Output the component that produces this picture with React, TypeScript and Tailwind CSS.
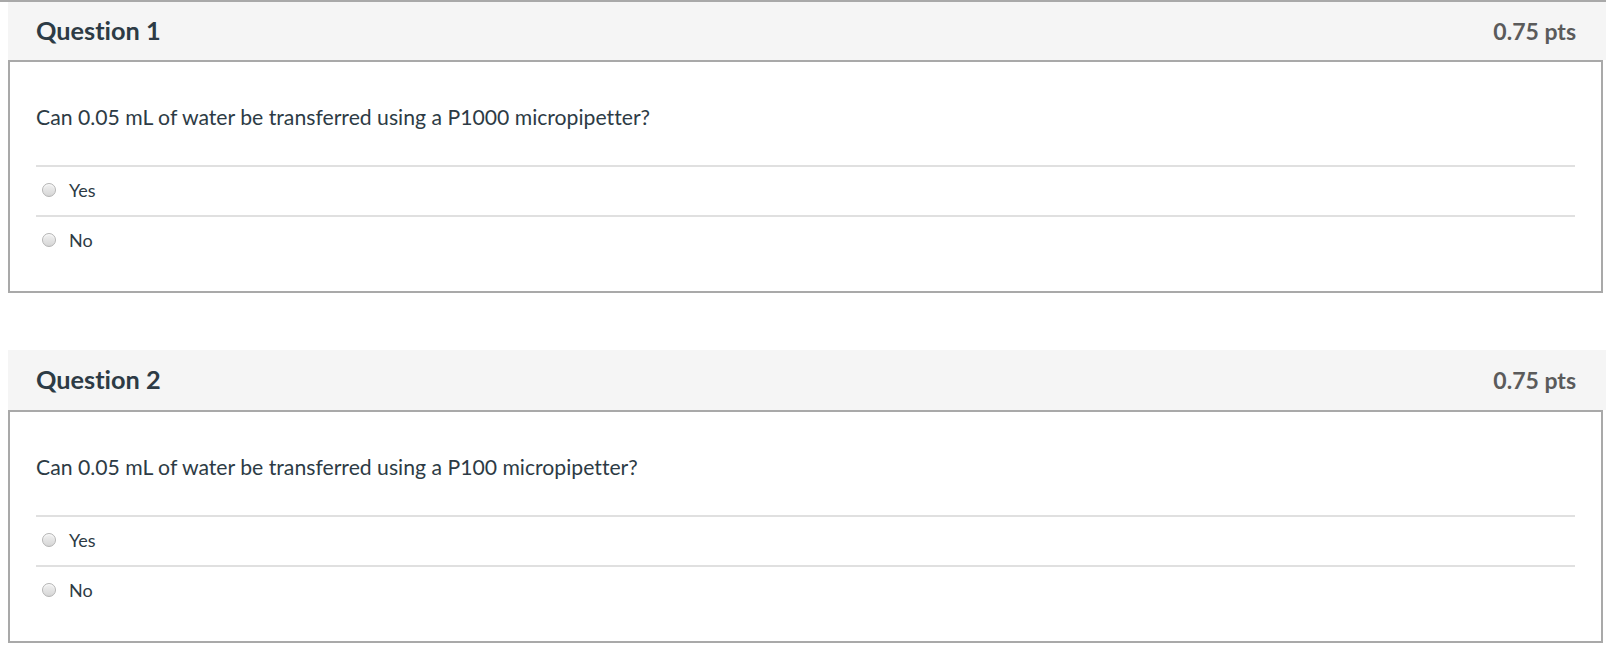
const questions = [
  { title: "Question 1", points: "0.75 pts", text: "Can 0.05 mL of water be transferred using a P1000 micropipetter?", first: true },
  { title: "Question 2", points: "0.75 pts", text: "Can 0.05 mL of water be transferred using a P100 micropipetter?", first: false },
]

const answers = ["Yes", "No"]

function Radio() {
  return (
    <span className="block w-[14px] h-[14px] rounded-full border border-[#b4b4b4] bg-linear-to-b from-[#f2f2f2] to-[#d6d6d6] shadow-[inset_0_1px_1px_rgba(255,255,255,0.8)]" />
  )
}

function Question({ title, points, text, first }: { title: string; points: string; text: string; first: boolean }) {
  return (
    <div>
      {/* Header strip */}
      <div className={first ? "border-t-2 border-[#a9a9a9]" : ""}>
        <div className={`ml-2 flex items-center justify-between bg-[#f5f5f5] pl-7 pr-[30px] ${first ? "h-[58px]" : "h-[60px]"}`}>
          <h2 className="text-[25.3px] font-bold text-[#2d3b45]">{title}</h2>
          <span className="text-[23px] font-bold text-[#5b5b5b]">{points}</span>
        </div>
      </div>

      {/* Body */}
      <div className="ml-2 mr-[3px] border-2 border-[#a9a9a9] px-[26px] pt-[41px] pb-[26px]">
        <p className="text-[21.2px] leading-[28px] text-[#2d3b45]">{text}</p>
        <div className="mt-[34px]">
          {answers.map((a) => (
            <div key={a} className="flex h-[50px] items-center border-t-2 border-[#e0e0e0] pb-[2px]">
              <span className="ml-[6px] mr-[13px]">
                <Radio />
              </span>
              <span className="text-[18px] text-[#2d3b45]">{a}</span>
            </div>
          ))}
        </div>
      </div>
    </div>
  )
}

export default function App() {
  return (
    <div className="min-h-screen bg-white font-['Lato',sans-serif] [font-variant-ligatures:none]">
      <div className="flex flex-col gap-[57px]">
        {questions.map((q) => (
          <Question key={q.title} {...q} />
        ))}
      </div>
    </div>
  )
}
